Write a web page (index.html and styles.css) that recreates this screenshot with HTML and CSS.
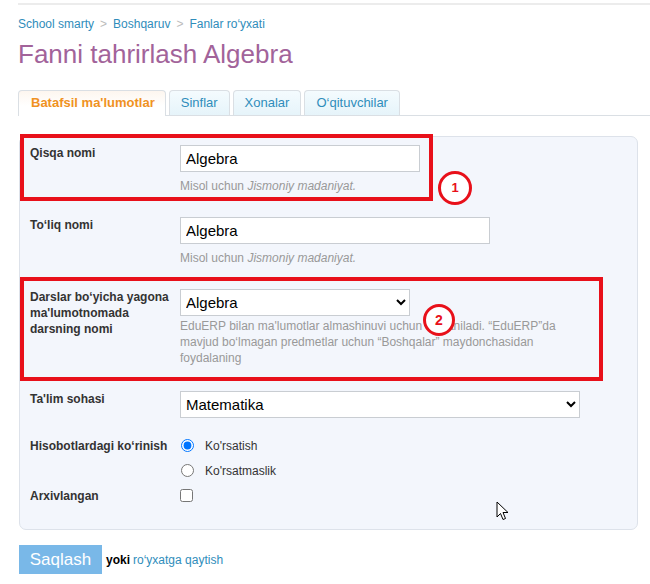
FILE: index.html
```html
<!DOCTYPE html>
<html lang="uz">
<head>
    <meta charset="UTF-8">
    <meta name="viewport" content="width=device-width, initial-scale=1.0">
    <title>Fanni tahrirlash Algebra</title>
    <link rel="stylesheet" href="styles.css">
</head>
<body>
    <div class="page">
        <div class="topline"></div>
        <div class="crumbs">
            <a href="#">School smarty</a><span class="sep">&gt;</span><a href="#">Boshqaruv</a><span class="sep">&gt;</span><a href="#">Fanlar ro‘yxati</a>
        </div>
        <h1>Fanni tahrirlash Algebra</h1>

        <ul class="tabs">
            <li class="active"><a href="#">Batafsil ma'lumotlar</a></li>
            <li><a href="#">Sinflar</a></li>
            <li><a href="#">Xonalar</a></li>
            <li><a href="#">O‘qituvchilar</a></li>
        </ul>

        <form class="panel">
            <div class="row">
                <label for="short">Qisqa nomi</label>
                <div class="field">
                    <input type="text" id="short" class="w240" value="Algebra">
                    <div class="hint">Misol uchun <i>Jismoniy madaniyat.</i></div>
                </div>
            </div>
            <div class="row">
                <label for="full">To‘liq nomi</label>
                <div class="field">
                    <input type="text" id="full" class="w310" value="Algebra">
                    <div class="hint">Misol uchun <i>Jismoniy madaniyat.</i></div>
                </div>
            </div>
            <div class="row wide">
                <label for="ref">Darslar bo‘yicha yagona ma'lumotnomada darsning nomi</label>
                <div class="field">
                    <select id="ref" class="w230">
                        <option selected>Algebra</option>
                    </select>
                    <div class="hint tight">EduERP bilan ma'lumotlar almashinuvi uchun qo‘llaniladi. “EduERP”da mavjud bo‘lmagan predmetlar uchun “Boshqalar” maydonchasidan foydalaning</div>
                </div>
            </div>
            <div class="row short">
                <label for="area">Ta'lim sohasi</label>
                <div class="field">
                    <select id="area" class="w400">
                        <option selected>Matematika</option>
                    </select>
                </div>
            </div>
            <div class="row line">
                <label>Hisobotlardagi ko‘rinish</label>
                <div class="field">
                    <div class="choice"><input type="radio" name="show" id="show1" checked><label for="show1">Ko'rsatish</label></div>
                    <div class="choice"><input type="radio" name="show" id="show2"><label for="show2">Ko'rsatmaslik</label></div>
                </div>
            </div>
            <div class="row line">
                <label for="arch">Arxivlangan</label>
                <div class="field">
                    <div class="choice last"><input type="checkbox" id="arch"></div>
                </div>
            </div>
        </form>

        <div class="actions">
            <button type="button" class="save">Saqlash</button>
            <b>yoki</b><a href="#">ro‘yxatga qaytish</a>
        </div>

        <!-- screenshot annotations -->
        <div class="mark box1"></div>
        <div class="mark box2"></div>
        <div class="num n1">1</div>
        <div class="num n2">2</div>
        <svg class="cursor" width="14" height="21" viewBox="0 0 14 21">
            <path d="M1 1 L1 16 L4.5 12.5 L7 18.5 L9.5 17.5 L7 11.5 L12 11.5 Z" fill="#fff" stroke="#000" stroke-width="1" stroke-linejoin="round"/>
        </svg>
    </div>
</body>
</html>
```

FILE: styles.css
```css
body {
    margin: 0;
    font-family: 'Liberation Sans', Arial, sans-serif;
    font-size: 12px;
    color: #333;
    background-color: #fff;
}
a {
    color: #2f8dbb;
    text-decoration: none;
}
.page {
    position: relative;
    padding-left: 18px;
    height: 584px;
    overflow: hidden;
}
.topline {
    margin-top: 3px;
    border-top: 2px solid #ececec;
}
.crumbs {
    margin-top: 11px;
    line-height: 16px;
}
.crumbs .sep {
    color: #bbb;
    margin: 0 6px;
}
h1 {
    margin: 7px 0 0;
    font-size: 26px;
    line-height: 30px;
    font-weight: normal;
    color: #a2639a;
}
.tabs {
    display: flex;
    gap: 3px;
    list-style: none;
    margin: 21px 0 0;
    padding: 0;
    border-bottom: 1px solid #dadfe4;
}
.tabs li {
    height: 24px;
    margin-bottom: -1px;
    border: 1px solid #dadfe4;
    border-bottom: none;
    border-radius: 4px 4px 0 0;
    background: linear-gradient(#f4fbfe, #e6f4fa);
}
.tabs li a {
    display: block;
    padding: 0 11px;
    line-height: 24px;
    font-size: 13px;
}
.tabs li.active {
    height: 25px;
    background: linear-gradient(#fdf6ef, #fff 60%);
}
.tabs li.active a {
    padding: 0 10px 0 12px;
    color: #f0921f;
    font-weight: bold;
}
.panel {
    margin: 20px 0 0 1px;
    width: 617px;
    padding: 8px 0 22px;
    background-color: #f3f6fc;
    border: 1px solid #dde2ea;
    border-radius: 7px;
}
.row {
    display: grid;
    grid-template-columns: 160px 1fr;
    margin-bottom: 23px;
}
.row.wide {
    margin-bottom: 25px;
}
.row.short {
    margin-bottom: 15px;
}
.row.line {
    margin-bottom: 0;
}
.row > label {
    padding: 0 10px;
    font-weight: bold;
    line-height: 16px;
}
.row.line > label {
    padding-top: 5px;
}
input[type=text], select {
    box-sizing: border-box;
    height: 27px;
    margin: 0;
    padding: 0 5px;
    font-family: 'Liberation Sans', Arial, sans-serif;
    font-size: 15px;
    color: #000;
    background-color: #fff;
    border: 1px solid #c9cdd2;
    border-radius: 0;
}
select {
    padding-left: 1px;
}
.w240 { width: 240px; }
.w310 { width: 310px; }
.w230 { width: 230px; }
.w400 { width: 400px; }
.hint {
    margin-top: 6px;
    width: 400px;
    line-height: 16px;
    color: #999;
}
.hint.tight {
    margin-top: 2px;
}
.choice {
    display: flex;
    align-items: center;
    height: 25px;
}
.choice.last {
    height: 24px;
}
.choice input {
    margin: 0 11px 0 1px;
    width: 13px;
    height: 13px;
}
.choice input[type=checkbox] {
    margin-left: 0;
}
.choice label {
    font-size: 12px;
    color: #333;
}
.actions {
    display: flex;
    align-items: center;
    margin: 15px 0 0 1px;
}
.actions b {
    margin: 0 3px 0 4px;
    color: #000;
}
.save {
    height: 29px;
    width: 83px;
    padding: 0;
    border: none;
    background-color: #79b8e8;
    color: #fff;
    font-family: 'Liberation Sans', Arial, sans-serif;
    font-size: 17px;
}
.mark {
    position: absolute;
    box-sizing: border-box;
    border: 4px solid #e8101a;
}
.box1 {
    left: 20px;
    top: 134px;
    width: 413px;
    height: 67px;
}
.box2 {
    left: 20px;
    top: 277px;
    width: 583px;
    height: 104px;
}
.num {
    position: absolute;
    box-sizing: border-box;
    width: 34px;
    height: 34px;
    border: 3px solid #e8101a;
    border-radius: 50%;
    background-color: #fff;
    color: #e8101a;
    font-weight: bold;
    font-size: 13px;
    line-height: 28px;
    text-align: center;
}
.n1 {
    left: 438px;
    top: 171px;
}
.n2 {
    left: 423px;
    top: 304px;
    width: 32px;
    height: 32px;
    line-height: 26px;
    font-size: 14px;
}
.cursor {
    position: absolute;
    left: 496px;
    top: 501px;
}
```
